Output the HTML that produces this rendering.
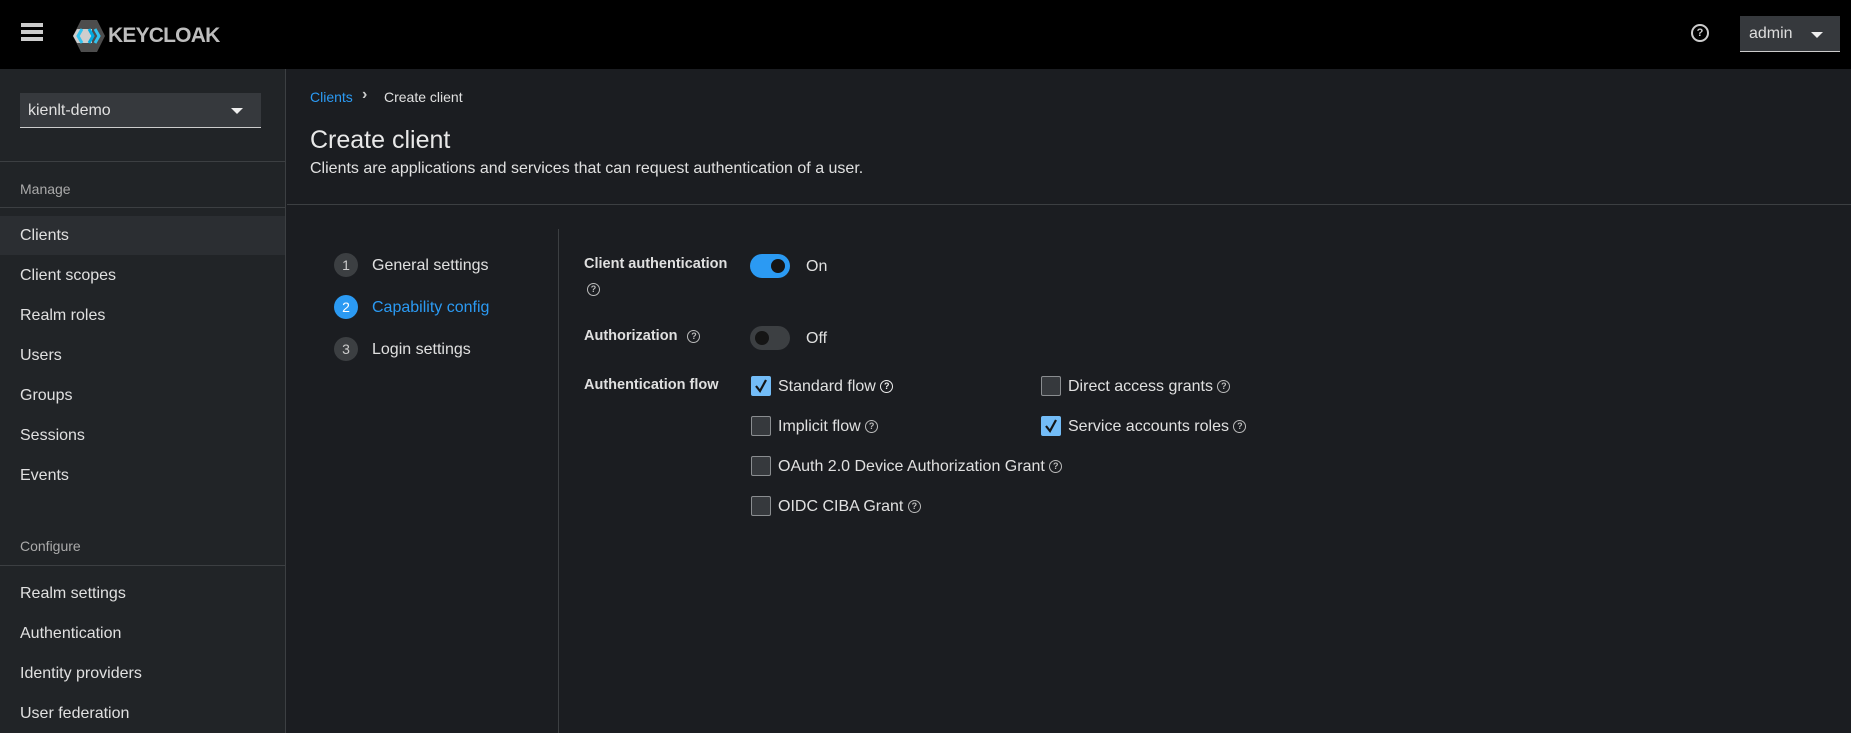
<!DOCTYPE html>
<html><head><meta charset="utf-8"><style>
*{box-sizing:border-box;margin:0;padding:0}
body{width:1851px;height:733px;overflow:hidden;background:#1b1d21;font-family:"Liberation Sans",sans-serif;color:#e0e0e0;position:relative}
.a{position:absolute;white-space:nowrap}
.hdr{left:0;top:0;width:1851px;height:69px;background:#000}
.side{left:0;top:69px;width:286px;height:664px;background:#212427;border-right:1px solid #3c3f42}
.nav{left:20px;font-size:16px;color:#e0e0e0}
.hr{height:1px;background:#3c3f42}
.help{display:inline-block;width:13px;height:13px;border:1.5px solid #bbb;border-radius:50%;font-size:9px;line-height:10px;text-align:center;color:#bbb;font-weight:bold;vertical-align:middle}
.cb{width:20px;height:20px;border:1px solid #8a8d90;border-radius:2px;background:#36393d}
.cb.on{background:#73bcf7;border-color:#73bcf7}
.cbl{font-size:16px;color:#e0e0e0}
.lbl{font-size:14.5px;font-weight:bold;color:#e0e0e0}
.step{width:24px;height:24px;border-radius:50%;background:#3c3f42;color:#ccc;font-size:14px;line-height:24px;text-align:center}
</style></head><body>
<div class="a hdr"></div>
<div class="a" style="left:21px;top:23px;width:22px;height:4px;background:#ccc;box-shadow:0 7px 0 #ccc,0 14px 0 #ccc"></div>
<svg class="a" style="left:72px;top:19px" width="34" height="34" viewBox="0 0 34 34"><polygon points="9,1 25,1 33,17 25,33 9,33 1,17" fill="#4d4d4d"/><polygon points="1,17 5,10 20,10 20,24 5,24" fill="#ddd" opacity=".9"/><path d="M10 10 L6 17 L10 24" stroke="#33c3f0" stroke-width="3" fill="none"/><path d="M17 10 L21 17 L17 24" stroke="#00a9e0" stroke-width="3" fill="none"/><path d="M23 10 L27 17 L23 24" stroke="#33c3f0" stroke-width="3" fill="none"/></svg>
<div class="a" style="left:108px;top:24px;font-size:21px;font-weight:bold;color:#bdbdbd;letter-spacing:-0.8px">KEYCLOAK</div>
<div class="a" style="left:1691px;top:24px;width:18px;height:18px;border:2px solid #ccc;border-radius:50%;font-size:11px;line-height:14px;text-align:center;font-weight:bold;color:#ccc">?</div>
<div class="a" style="left:1740px;top:16px;width:100px;height:36px;background:#36393d;border-bottom:1px solid #ccc"></div>
<div class="a" style="left:1749px;top:25px;font-size:16px;color:#ddd">admin</div>
<div class="a" style="left:1811px;top:32px;border-left:6px solid transparent;border-right:6px solid transparent;border-top:6px solid #eee"></div>

<div class="a side"></div>
<div class="a" style="left:20px;top:93px;width:241px;height:35px;background:#36393d;border-bottom:1px solid #ccc"></div>
<div class="a" style="left:28px;top:102px;font-size:16px;color:#e0e0e0">kienlt-demo</div>
<div class="a" style="left:231px;top:108px;border-left:6px solid transparent;border-right:6px solid transparent;border-top:6px solid #eee"></div>
<div class="a hr" style="left:0;top:161px;width:286px"></div>
<div class="a" style="left:20px;top:181px;font-size:14px;color:#aaa">Manage</div>
<div class="a hr" style="left:0;top:207px;width:286px"></div>
<div class="a" style="left:0;top:216px;width:285px;height:39px;background:#2b2e32"></div>
<div class="a nav" style="top:227px">Clients</div>
<div class="a nav" style="top:267px">Client scopes</div>
<div class="a nav" style="top:307px">Realm roles</div>
<div class="a nav" style="top:347px">Users</div>
<div class="a nav" style="top:387px">Groups</div>
<div class="a nav" style="top:427px">Sessions</div>
<div class="a nav" style="top:467px">Events</div>
<div class="a" style="left:20px;top:538px;font-size:14px;color:#aaa">Configure</div>
<div class="a hr" style="left:0;top:565px;width:286px"></div>
<div class="a nav" style="top:585px">Realm settings</div>
<div class="a nav" style="top:625px">Authentication</div>
<div class="a nav" style="top:665px">Identity providers</div>
<div class="a nav" style="top:705px">User federation</div>

<div class="a" style="left:310px;top:89px;font-size:14px;color:#2b9af3">Clients</div>
<div class="a" style="left:362px;top:86px;font-size:16px;color:#ccc;font-weight:bold">›</div>
<div class="a" style="left:384px;top:89px;font-size:14px;color:#e0e0e0">Create client</div>
<div class="a" style="left:310px;top:126px;font-size:25px;color:#e8e8e8">Create client</div>
<div class="a" style="left:310px;top:160px;font-size:16px;color:#e0e0e0">Clients are applications and services that can request authentication of a user.</div>
<div class="a hr" style="left:287px;top:204px;width:1564px"></div>
<div class="a" style="left:558px;top:229px;width:1px;height:504px;background:#3c3f42"></div>

<div class="a step" style="left:334px;top:253px">1</div>
<div class="a" style="left:372px;top:257px;font-size:16px;color:#e0e0e0">General settings</div>
<div class="a step" style="left:334px;top:295px;background:#2b9af3;color:#fff">2</div>
<div class="a" style="left:372px;top:299px;font-size:16px;color:#2b9af3">Capability config</div>
<div class="a step" style="left:334px;top:337px">3</div>
<div class="a" style="left:372px;top:341px;font-size:16px;color:#e0e0e0">Login settings</div>

<div class="a lbl" style="left:584px;top:256px">Client authentication</div>
<div class="a" style="left:587px;top:281px"><span class="help">?</span></div>
<div class="a" style="left:750px;top:254px;width:40px;height:24px;border-radius:12px;background:#2b9af3"></div>
<div class="a" style="left:771px;top:259px;width:14px;height:14px;border-radius:50%;background:#151515"></div>
<div class="a" style="left:806px;top:258px;font-size:16px">On</div>
<div class="a lbl" style="left:584px;top:328px">Authorization <span class="help" style="margin-left:6px">?</span></div>
<div class="a" style="left:750px;top:326px;width:40px;height:24px;border-radius:12px;background:#3c3f42"></div>
<div class="a" style="left:755px;top:331px;width:14px;height:14px;border-radius:50%;background:#151515"></div>
<div class="a" style="left:806px;top:330px;font-size:16px">Off</div>
<div class="a lbl" style="left:584px;top:377px">Authentication flow</div>

<div class="a cb on" style="left:751px;top:376px"></div><svg class="a" style="left:753px;top:378px" width="16" height="16"><path d="M3 8 L7 13 L13 2" stroke="#151515" stroke-width="2.2" fill="none"/></svg>
<div class="a cbl" style="left:778px;top:378px">Standard flow <span class="help" style="border-color:#eee;color:#eee">?</span></div>
<div class="a cb" style="left:751px;top:416px"></div>
<div class="a cbl" style="left:778px;top:418px">Implicit flow <span class="help">?</span></div>
<div class="a cb" style="left:751px;top:456px"></div>
<div class="a cbl" style="left:778px;top:458px">OAuth 2.0 Device Authorization Grant <span class="help">?</span></div>
<div class="a cb" style="left:751px;top:496px"></div>
<div class="a cbl" style="left:778px;top:498px">OIDC CIBA Grant <span class="help">?</span></div>
<div class="a cb" style="left:1041px;top:376px"></div>
<div class="a cbl" style="left:1068px;top:378px">Direct access grants <span class="help">?</span></div>
<div class="a cb on" style="left:1041px;top:416px"></div><svg class="a" style="left:1043px;top:418px" width="16" height="16"><path d="M3 8 L7 13 L13 2" stroke="#151515" stroke-width="2.2" fill="none"/></svg>
<div class="a cbl" style="left:1068px;top:418px">Service accounts roles <span class="help">?</span></div>
</body></html>
